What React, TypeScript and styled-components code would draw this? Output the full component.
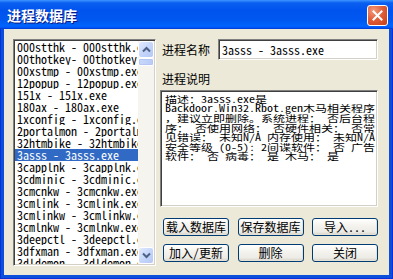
import React from "react";
import styled, { createGlobalStyle } from "styled-components";

const MONO = `"Noto Sans Mono CJK SC", "Noto Sans CJK SC", monospace`;
const CJK = `"Noto Sans CJK SC", "Noto Sans", sans-serif`;

const GlobalStyle = createGlobalStyle`
  html, body { margin: 0; padding: 0; background: #ffffff; }
  body { font-family: ${CJK}; }
  * { box-sizing: border-box; }
`;

const Window = styled.div`
  width: 393px;
  height: 279px;
  display: flex;
  flex-direction: column;
  overflow: hidden;
  background: #0b4fdb;
`;

const TitleBar = styled.div`
  height: 29px;
  flex: none;
  display: flex;
  align-items: center;
  justify-content: space-between;
  padding: 0 5px 0 7px;
  background: linear-gradient(
    to bottom,
    #3d95ff 0%,
    #0a5ff0 10%,
    #0053ee 35%,
    #0058f0 70%,
    #0063fb 88%,
    #005bff 94%,
    #0046dd 97%,
    #003dd7 100%
  );
`;

const Title = styled.span`
  font-family: ${CJK};
  font-size: 14px;
  font-weight: 700;
  color: #ffffff;
  line-height: 16px;
  text-shadow: 1px 1px 0 #0a1883;
  margin-top: 1px;
`;

const CloseButton = styled.div`
  width: 21px;
  height: 21px;
  border: 1px solid #ffffff;
  border-radius: 3px;
  background: radial-gradient(circle at 30% 25%, #f39a7c 0%, #e0603c 45%, #c83c14 100%);
  display: flex;
  align-items: center;
  justify-content: center;
  margin-top: 1px;
`;

const Frame = styled.div`
  flex: 1;
  display: flex;
  padding: 0 4px 4px 4px;
  background: #0b4fdb;
  box-shadow: inset 1px 0 #0831d9, inset -1px 0 #0831d9, inset 0 -1px #0831d9;
`;

const Body = styled.div`
  flex: 1;
  display: flex;
  align-items: flex-start;
  gap: 4px;
  padding: 10px 11px 0 9px;
  background: #ece9d8;
`;

const Sunken = styled.div`
  border: 1px solid;
  border-color: #808080 #ffffff #ffffff #808080;
  box-shadow: inset 1px 1px #404040, inset -1px -1px #d4d0c8;
  background: #ffffff;
`;

const ListBox = styled(Sunken)`
  width: 143px;
  height: 227px;
  flex: none;
  display: flex;
  padding: 1px;
  overflow: hidden;
`;

const Items = styled.div`
  flex: 1;
  overflow: hidden;
  display: flex;
  flex-direction: column;
`;

const Item = styled.div<{ $selected?: boolean }>`
  height: 12px;
  flex: none;
  line-height: 12px;
  font-family: ${MONO};
  font-size: 12px;
  padding-left: 2px;
  white-space: nowrap;
  overflow: hidden;
  color: ${(p) => (p.$selected ? "#ffffff" : "#000000")};
  background: ${(p) => (p.$selected ? "#316ac5" : "transparent")};
`;

const ScrollBar = styled.div`
  width: 16px;
  flex: none;
  display: flex;
  flex-direction: column;
  background: #f5f4ef;
`;

const ScrollBtn = styled.div`
  height: 17px;
  flex: none;
  border: 1px solid #ffffff;
  border-radius: 3px;
  background: linear-gradient(to bottom right, #e2ebfe 0%, #c6d6fb 50%, #b3c8f5 100%);
  display: flex;
  align-items: center;
  justify-content: center;
`;

const Thumb = styled.div`
  height: 8px;
  flex: none;
  border: 1px solid #ffffff;
  border-radius: 2px;
  background: linear-gradient(to right, #c9d8fc, #b8cbf7);
  box-shadow: inset 0 0 0 1px #b5c7f0;
`;

const Track = styled.div`
  flex: 1;
`;

const RightColumn = styled.div`
  width: 218px;
  flex: none;
  display: flex;
  flex-direction: column;
`;

const NameRow = styled.div`
  height: 21px;
  display: flex;
  align-items: center;
`;

const Label = styled.div<{ $width?: number; $mt?: number }>`
  width: ${(p) => (p.$width ? `${p.$width}px` : "auto")};
  flex: none;
  padding-left: 2px;
  margin-top: ${(p) => p.$mt ?? 0}px;
  font-family: ${CJK};
  font-size: 12px;
  line-height: 14px;
  height: 14px;
  color: #000000;
  white-space: nowrap;
`;

const TextField = styled(Sunken)`
  width: 160px;
  height: 21px;
  padding: 0 0 0 3px;
  display: flex;
  align-items: center;
  font-family: ${MONO};
  font-size: 12px;
  line-height: 12px;
  white-space: nowrap;
  color: #000000;
`;

const DescBox = styled(Sunken)`
  width: 218px;
  height: 117px;
  margin-top: 4px;
  padding: 3px 2px 0 4px;
  overflow: hidden;
`;

const DescText = styled.div`
  font-family: ${MONO};
  font-size: 12px;
  line-height: 12px;
  color: #000000;
  transform: scaleY(0.8);
  transform-origin: 0 0;
`;

const DescLine = styled.div`
  height: 12px;
  white-space: pre;
`;

const ButtonGrid = styled.div`
  margin-top: 11px;
  padding-left: 3px;
  display: grid;
  grid-template-columns: repeat(3, 66px);
  grid-auto-rows: 18px;
  justify-content: space-between;
  row-gap: 8px;
`;

const Button = styled.div`
  border: 1px solid #003c74;
  border-radius: 3px;
  background: linear-gradient(to bottom, #ffffff 0%, #f4f3ee 40%, #ecebe6 80%, #d6d0c5 100%);
  box-shadow: inset -1px -1px 0 #e3e0d6;
  display: flex;
  align-items: center;
  justify-content: center;
  font-family: ${MONO};
  font-size: 12px;
  line-height: 12px;
  color: #000000;
  white-space: pre;
`;

const items = [
  "000stthk - 000stthk.exe",
  "00thotkey- 00thotkey.exe",
  "00xstmp - 00xstmp.exe",
  "12popup - 12popup.exe",
  "151x - 151x.exe",
  "180ax - 180ax.exe",
  "1xconfig - 1xconfig.exe",
  "2portalmon - 2portalmon.exe",
  "32htmbike - 32htmbike.exe",
  "3asss - 3asss.exe",
  "3capplnk - 3capplnk.exe",
  "3cdminic - 3cdminic.exe",
  "3cmcnkw - 3cmcnkw.exe",
  "3cmlink - 3cmlink.exe",
  "3cmlinkw - 3cmlinkw.exe",
  "3cmlnkw - 3cmlnkw.exe",
  "3deepctl - 3deepctl.exe",
  "3dfxman - 3dfxman.exe",
  "3dldemon - 3dldemon.exe",
];

const descLines = [
  "描述：3asss.exe是",
  "Backdoor.Win32.Rbot.gen木马相关程序",
  "，建议立即删除。系统进程： 否后台程",
  "序： 否使用网络： 否硬件相关： 否常",
  "见错误： 未知N/A 内存使用： 未知N/A",
  "安全等级 (0-5): 2间谍软件： 否 广告",
  "软件： 否 病毒： 是 木马： 是",
];

const buttons = ["载入数据库", "保存数据库", "导入...", "加入/更新", "删除", "关闭"];

const Arrow = ({ up }: { up?: boolean }) => (
  <svg width="9" height="7" viewBox="0 0 9 7">
    <path
      d={up ? "M1 5.5 L4.5 2 L8 5.5" : "M1 1.5 L4.5 5 L8 1.5"}
      fill="none"
      stroke="#4d6185"
      strokeWidth="2"
    />
  </svg>
);

export default function App() {
  return (
    <>
      <GlobalStyle />
      <Window>
        <TitleBar>
          <Title>进程数据库</Title>
          <CloseButton>
            <svg width="13" height="13" viewBox="0 0 13 13">
              <path d="M2.5 2.5 L10.5 10.5 M10.5 2.5 L2.5 10.5" stroke="#ffffff" strokeWidth="2" strokeLinecap="square" />
            </svg>
          </CloseButton>
        </TitleBar>
        <Frame>
          <Body>
            <ListBox>
              <Items>
                {items.map((it, i) => (
                  <Item key={it} $selected={i === 9}>
                    {it}
                  </Item>
                ))}
              </Items>
              <ScrollBar>
                <ScrollBtn>
                  <Arrow up />
                </ScrollBtn>
                <Thumb />
                <Track />
                <ScrollBtn>
                  <Arrow />
                </ScrollBtn>
              </ScrollBar>
            </ListBox>
            <RightColumn>
              <NameRow>
                <Label $width={58}>进程名称</Label>
                <TextField>3asss - 3asss.exe</TextField>
              </NameRow>
              <Label $mt={12}>进程说明</Label>
              <DescBox>
                <DescText>
                  {descLines.map((l) => (
                    <DescLine key={l}>{l}</DescLine>
                  ))}
                </DescText>
              </DescBox>
              <ButtonGrid>
                {buttons.map((b) => (
                  <Button key={b}>{b}</Button>
                ))}
              </ButtonGrid>
            </RightColumn>
          </Body>
        </Frame>
      </Window>
    </>
  );
}
